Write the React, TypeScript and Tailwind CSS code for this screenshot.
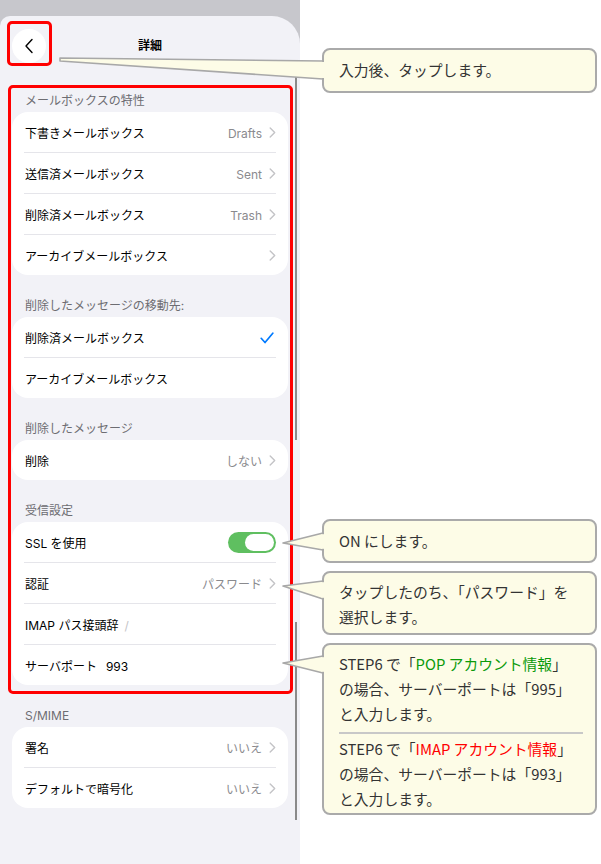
import React from "react";

const Chevron = () => (
  <svg width="7" height="11" viewBox="0 0 7 11" className="ml-[7px] shrink-0 mt-[1px]">
    <path d="M1.2 1 L5.7 5.5 L1.2 10" fill="none" stroke="#c4c4c7" strokeWidth="1.4" strokeLinecap="round" strokeLinejoin="round" />
  </svg>
);

const Check = () => (
  <svg width="14" height="12" viewBox="0 0 14 12" className="mr-[2px] mt-[2px] shrink-0">
    <path d="M1.2 6.3 L5 10.5 L12.8 1.2" fill="none" stroke="#007aff" strokeWidth="1.7" strokeLinecap="round" strokeLinejoin="round" />
  </svg>
);

const Toggle = () => (
  <div className="w-[48px] h-[21px] rounded-full bg-[#5fbf60] flex items-center justify-end pr-[2px]">
    <div className="w-[29px] h-[17px] rounded-full bg-white" />
  </div>
);

type RowProps = { label: React.ReactNode; right?: React.ReactNode };

const Row = ({ label, right }: RowProps) => (
  <div className="h-[40px] flex items-center pl-[13px] pr-[12px]">
    <div className="flex-1 flex items-center pt-[3px] text-[12px] text-black whitespace-nowrap">{label}</div>
    <div className="flex items-center">{right}</div>
  </div>
);

const Value = ({ v }: { v?: string }) => (
  <>
    {v ? <span className="pt-[3px] text-[12px] text-[#8a8a8e]">{v}</span> : null}
    <Chevron />
  </>
);

const Sep = () => <div className="h-px bg-[#e5e5ea] mx-[12px]" />;

const Header = ({ t }: { t: string }) => (
  <div className="h-[42px] flex items-end pb-[3px] pl-[13px] text-[12px] leading-[16px] text-[#6d6d72]">{t}</div>
);

const Card = ({ children }: { children: React.ReactNode }) => (
  <div className="bg-white rounded-[16px] overflow-hidden">{children}</div>
);

export default function App() {
  return (
    <div className="relative w-[601px] h-[864px] overflow-hidden bg-white flex font-['Inter','Noto_Sans_CJK_JP',sans-serif]">
      {/* Phone */}
      <div className="w-[300px] h-full flex flex-col bg-[#c7c7cc] shrink-0">
        <div className="h-[16px] shrink-0" />
        <div className="flex-1 bg-[#f2f2f7] rounded-tl-[10px] rounded-tr-[28px] px-[12px]">
          {/* nav */}
          <div className="pt-[13px] pb-[7px]">
            <div className="h-[34px] grid grid-cols-[34px_1fr_34px] items-center">
              <div className="w-[34px] h-[34px] rounded-full bg-white flex items-center justify-center">
                <svg width="10" height="16" viewBox="0 0 10 16">
                  <path d="M8 1.5 L2 8 L8 14.5" fill="none" stroke="#000" strokeWidth="1.4" strokeLinecap="round" strokeLinejoin="round" />
                </svg>
              </div>
              <div className="text-center text-[12px] font-bold text-black">詳細</div>
              <div />
            </div>
          </div>

          <Header t="メールボックスの特性" />
          <Card>
            <Row label="下書きメールボックス" right={<Value v="Drafts" />} />
            <Sep />
            <Row label="送信済メールボックス" right={<Value v="Sent" />} />
            <Sep />
            <Row label="削除済メールボックス" right={<Value v="Trash" />} />
            <Sep />
            <Row label="アーカイブメールボックス" right={<Value />} />
          </Card>

          <Header t="削除したメッセージの移動先:" />
          <Card>
            <Row label="削除済メールボックス" right={<Check />} />
            <Sep />
            <Row label="アーカイブメールボックス" />
          </Card>

          <Header t="削除したメッセージ" />
          <Card>
            <Row label="削除" right={<Value v="しない" />} />
          </Card>

          <Header t="受信設定" />
          <Card>
            <Row label="SSL を使用" right={<Toggle />} />
            <Sep />
            <Row label="認証" right={<Value v="パスワード" />} />
            <Sep />
            <Row
              label={
                <>
                  <span>IMAP パス接頭辞</span>
                  <span className="ml-[6px] text-[#c4c4c7]">/</span>
                </>
              }
            />
            <Sep />
            <Row
              label={
                <>
                  <span>サーバポート</span>
                  <span className="ml-[9px]">993</span>
                </>
              }
            />
          </Card>

          <Header t="S/MIME" />
          <Card>
            <Row label="署名" right={<Value v="いいえ" />} />
            <Sep />
            <Row label="デフォルトで暗号化" right={<Value v="いいえ" />} />
          </Card>
        </div>
      </div>

      {/* Callouts */}
      <div className="flex-1 flex flex-col pl-[22px] pr-[4px] font-['Noto_Sans_CJK_JP',sans-serif] text-[14.8px] text-[#333333]">
        <div className="mt-[48px] h-[45px] border-2 border-[#aaaaaa] rounded-[8px] bg-[#fdfce7] pl-[15px] pr-[8px] flex items-center">
          入力後、タップします。
        </div>
        <div className="mt-[426px] h-[44px] border-2 border-[#aaaaaa] rounded-[8px] bg-[#fdfce7] pl-[15px] pr-[8px] flex items-center">
          ON にします。
        </div>
        <div className="mt-[8px] border-2 border-[#aaaaaa] rounded-[8px] bg-[#fdfce7] pl-[15px] pr-[8px] pt-[6px] pb-[4px] leading-[25px] whitespace-nowrap">
          <div>タップしたのち、「パスワード」を</div>
          <div>選択します。</div>
        </div>
        <div className="mt-[8px] border-2 border-[#aaaaaa] rounded-[8px] bg-[#fdfce7] pl-[15px] pr-[8px] pt-[6px] pb-[2px] leading-[25px] whitespace-nowrap">
          <div>
            STEP6 で「<span className="text-[#0a9a0a]">POP アカウント情報</span>」
          </div>
          <div>の場合、サーバーポートは「995」</div>
          <div>と入力します。</div>
          <div className="mt-[6px] mb-[2px] mr-[4px] h-[2px] bg-[#c8c8c8]" />
          <div>
            STEP6 で「<span className="text-[#ff0000]">IMAP アカウント情報</span>」
          </div>
          <div>の場合、サーバーポートは「993」</div>
          <div>と入力します。</div>
        </div>
      </div>

      {/* scroll indicators */}
      <div className="absolute left-[295px] top-[77px] w-[1.5px] h-[363px] bg-[#8a8a8a]" />
      <div className="absolute left-[295px] top-[622px] w-[1.5px] h-[198px] bg-[#8a8a8a]" />

      {/* red highlight frames */}
      <div className="absolute left-[7px] top-[21px] w-[45px] h-[45px] border-[3px] border-[#ff0000] rounded-[5px]" />
      <div className="absolute left-[8px] top-[85px] w-[285px] h-[609px] border-[3px] border-[#ff0000] rounded-[5px]" />

      {/* callout tails */}
      <svg className="absolute left-0 top-0 pointer-events-none" width="601" height="864" viewBox="0 0 601 864">
        <g fill="#fdfce7" stroke="#a8a8a8" strokeWidth="1.6" strokeLinejoin="round">
          <polygon points="60,58 323,61 323,79 60,61" />
          <polygon points="283,543 323,533 323,550" />
          <polygon points="283,586 323,581 323,599" />
          <polygon points="283,663 323,656 323,673" />
        </g>
        <g fill="#fdfce7">
          <rect x="321.5" y="62" width="4.5" height="16" />
          <rect x="321.5" y="534.2" width="4.5" height="14.6" />
          <rect x="321.5" y="582.2" width="4.5" height="15.6" />
          <rect x="321.5" y="657.2" width="4.5" height="14.6" />
        </g>
      </svg>
    </div>
  );
}
